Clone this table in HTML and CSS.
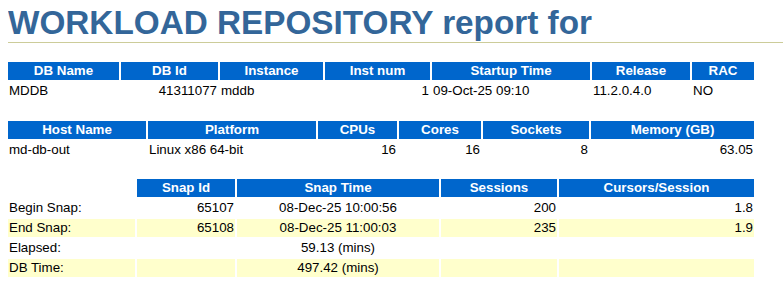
FILE: index.html
```html
<!DOCTYPE html>
<html>
<head>
<meta charset="utf-8">
<title>AWR Report</title>
<link rel="stylesheet" href="styles.css">
</head>
<body>
<h1 class="awr">WORKLOAD REPOSITORY report for</h1>

<table class="tdiff t1">
  <tr>
    <th class="awrbg c1">DB Name</th>
    <th class="awrbg c2">DB Id</th>
    <th class="awrbg c3">Instance</th>
    <th class="awrbg c4">Inst num</th>
    <th class="awrbg c5">Startup Time</th>
    <th class="awrbg c6">Release</th>
    <th class="awrbg c7">RAC</th>
  </tr>
  <tr>
    <td class="awrnc">MDDB</td>
    <td class="awrnc r">41311077</td>
    <td class="awrnc">mddb</td>
    <td class="awrnc r">1</td>
    <td class="awrnc">09-Oct-25 09:10</td>
    <td class="awrnc">11.2.0.4.0</td>
    <td class="awrnc">NO</td>
  </tr>
</table>

<table class="tdiff t2">
  <tr>
    <th class="awrbg h1c">Host Name</th>
    <th class="awrbg h2c">Platform</th>
    <th class="awrbg h3c">CPUs</th>
    <th class="awrbg h4c">Cores</th>
    <th class="awrbg h5c">Sockets</th>
    <th class="awrbg h6c">Memory (GB)</th>
  </tr>
  <tr>
    <td class="awrnc">md-db-out</td>
    <td class="awrnc">Linux x86 64-bit</td>
    <td class="awrnc r">16</td>
    <td class="awrnc r">16</td>
    <td class="awrnc r">8</td>
    <td class="awrnc r">63.05</td>
  </tr>
</table>

<table class="tdiff t3">
  <tr>
    <th class="blank s1"></th>
    <th class="awrbg s2">Snap Id</th>
    <th class="awrbg s3">Snap Time</th>
    <th class="awrbg s4">Sessions</th>
    <th class="awrbg s5">Cursors/Session</th>
  </tr>
  <tr>
    <td class="awrnc">Begin Snap:</td>
    <td class="awrnc r">65107</td>
    <td class="awrnc c">08-Dec-25 10:00:56</td>
    <td class="awrnc r">200</td>
    <td class="awrnc r">1.8</td>
  </tr>
  <tr>
    <td class="awrc">End Snap:</td>
    <td class="awrc r">65108</td>
    <td class="awrc c">08-Dec-25 11:00:03</td>
    <td class="awrc r">235</td>
    <td class="awrc r">1.9</td>
  </tr>
  <tr>
    <td class="awrnc">Elapsed:</td>
    <td class="awrnc"></td>
    <td class="awrnc c">59.13 (mins)</td>
    <td class="awrnc"></td>
    <td class="awrnc"></td>
  </tr>
  <tr>
    <td class="awrc">DB Time:</td>
    <td class="awrc"></td>
    <td class="awrc c">497.42 (mins)</td>
    <td class="awrc"></td>
    <td class="awrc"></td>
  </tr>
</table>
</body>
</html>
```

FILE: styles.css
```css
body {
  margin: 8px 0 8px 8px;
  font-family: "Liberation Sans", Arial, Helvetica, sans-serif;
  font-size: 13.33px;
  color: #000;
  background: #fff;
}

h1.awr {
  font: bold 33.3px "Liberation Sans", Arial, Helvetica, sans-serif;
  color: #336699;
  border-bottom: 1px solid #cccc99;
  margin: 0;
  padding: 0 0 5px 0;
  line-height: 29px;
}

table.tdiff {
  border-collapse: separate;
  border-spacing: 2px;
  width: 750px;
  table-layout: fixed;
  margin-left: -2px;
  font-size: 13.33px;
  line-height: 16px;
}

.t1 { margin-top: 17px; }
.t2 { margin-top: 17px; }
.t3 { margin-top: 16px; }

th, td {
  padding: 1px;
  white-space: nowrap;
  overflow: hidden;
}

th.awrbg {
  background: #0066cc;
  color: #fff;
  font-weight: bold;
  text-align: center;
}

th.blank { background: transparent; }

td.awrnc { background: #fff; text-align: left; }
td.awrc { background: #ffffcc; text-align: left; }
td.r { text-align: right; }
td.c { text-align: center; }

.c1 { width: 109px; }
.c2 { width: 95px; }
.c3 { width: 101px; }
.c4 { width: 103px; }
.c5 { width: 156px; }
.c6 { width: 96px; }

.h1c { width: 136px; }
.h2c { width: 166px; }
.h3c { width: 77px; }
.h4c { width: 80px; }
.h5c { width: 104px; }

.s1 { width: 125px; }
.s2 { width: 96px; }
.s3 { width: 200px; }
.s4 { width: 114px; }
```
